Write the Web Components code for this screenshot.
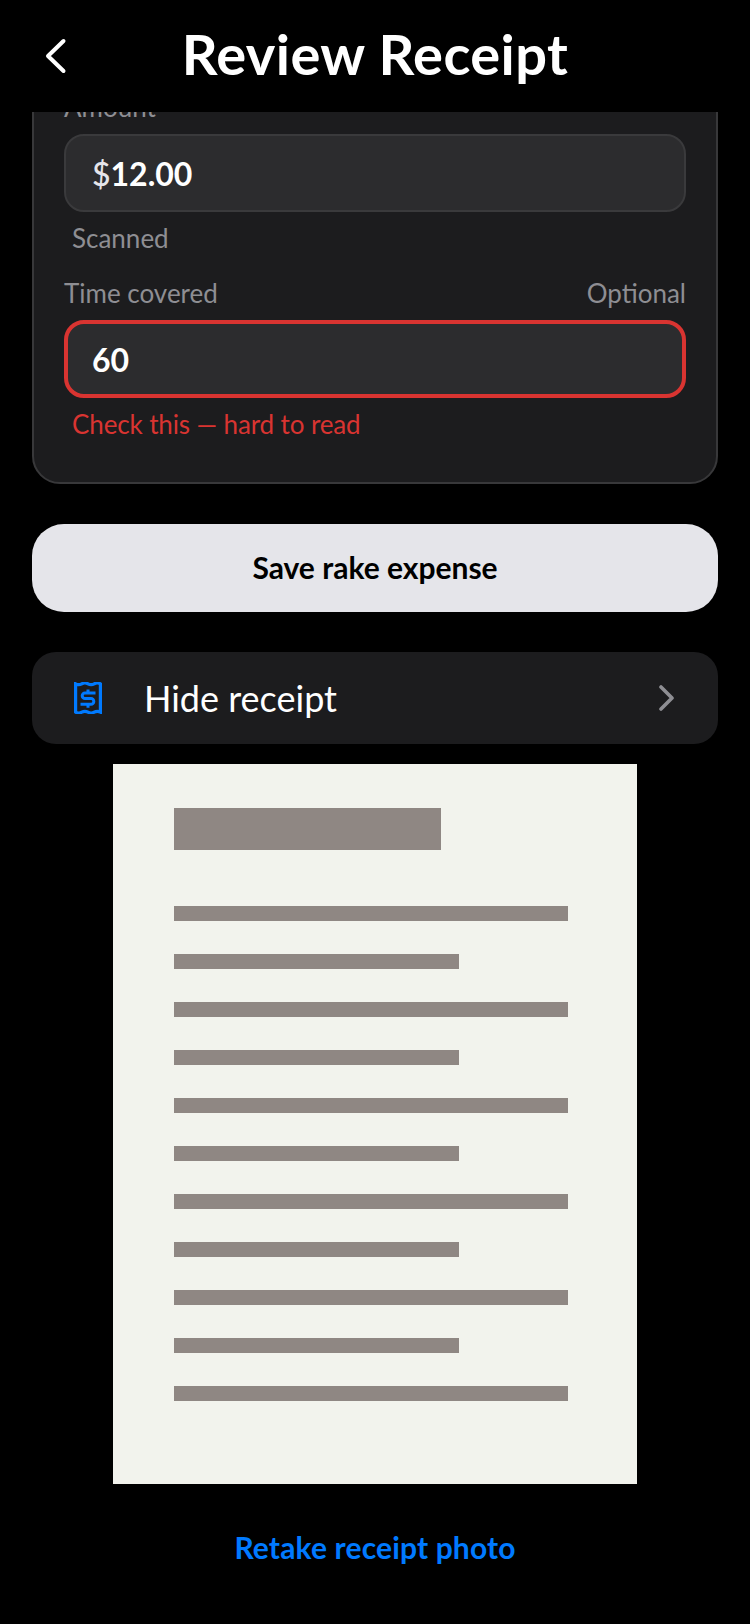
<!DOCTYPE html>
<html lang="en">
<head>
<meta charset="utf-8">
<title>Review Receipt</title>
<style>
  html, body { margin: 0; background: #000; }
  body {
    width: 750px;
    height: 1624px;
    overflow: hidden;
    display: flex;
    flex-direction: column;
    font-family: Lato, "Open Sans", sans-serif;
  }
  main {
    flex: 1;
    min-height: 0;
    overflow: hidden;
    display: flex;
    flex-direction: column;
    padding: 0 32px;
  }
</style>
</head>
<body>
<app-header heading="Review Receipt"></app-header>
<main>
  <form-card>
    <form-field label="Amount" hint="Scanned"><span slot="prefix">$</span>12.00</form-field>
    <form-field label="Time covered" aside="Optional" error="Check this — hard to read">60</form-field>
  </form-card>
  <primary-button>Save rake expense</primary-button>
  <disclosure-row>Hide receipt</disclosure-row>
  <receipt-preview></receipt-preview>
  <text-link>Retake receipt photo</text-link>
</main>

<script>
class AppHeader extends HTMLElement {
  constructor() {
    super();
    this.attachShadow({ mode: 'open' });
  }

  connectedCallback() {
    this.shadowRoot.innerHTML = `
      <style>
        :host {
          display: grid;
          grid-template-columns: 112px 1fr 112px;
          align-items: center;
          flex: none;
          height: 112px;
          background: #000;
          color: #fff;
        }
        .back { display: flex; padding-left: 44px; }
        h1 {
          margin: 0;
          padding-bottom: 4px;
          text-align: center;
          font-size: 56px;
          font-weight: 700;
          letter-spacing: 0.4px;
          line-height: 1;
        }
      </style>
      <div class="back">
        <svg width="24" height="36" viewBox="0 0 24 36" fill="none" stroke="#fff" stroke-width="4" stroke-linecap="round" stroke-linejoin="round">
          <path d="M19.5 3 L4 18 L19.5 33"/>
        </svg>
      </div>
      <h1>${this.getAttribute('heading')}</h1>
      <div></div>
    `;
  }
}

class FormCard extends HTMLElement {
  constructor() {
    super();
    this.attachShadow({ mode: 'open' });
    this.shadowRoot.innerHTML = `
      <style>
        :host {
          display: flex;
          flex-direction: column;
          flex: none;
          gap: 27px;
          margin-top: -51px;
          padding: 30px 30px 44px;
          background: #1c1c1e;
          border: 2px solid #38383a;
          border-radius: 28px;
        }
      </style>
      <slot></slot>
    `;
  }
}

class FormField extends HTMLElement {
  constructor() {
    super();
    this.attachShadow({ mode: 'open' });
  }

  connectedCallback() {
    const error = this.getAttribute('error');
    const note = error || this.getAttribute('hint') || '';
    this.shadowRoot.innerHTML = `
      <style>
        :host { display: block; font-size: 26px; line-height: 28px; color: #8e8e93; }
        .top { display: flex; justify-content: space-between; margin-bottom: 13px; }
        .box {
          display: flex;
          align-items: center;
          box-sizing: border-box;
          height: 78px;
          padding: 2px 26px 0;
          background: #2c2c2e;
          border: 2px solid #3a3a3c;
          border-radius: 20px;
          color: #fff;
          font-size: 32px;
          font-weight: 700;
        }
        ::slotted([slot=prefix]) { color: #e5e5ea; font-weight: 500; }
        .note { margin: 12px 8px 0; }
        :host([error]) .box { border: 4px solid #d93431; padding: 2px 24px 0; }
        :host([error]) .note { color: #d93431; letter-spacing: -0.12px; }
      </style>
      <div class="top">
        <span>${this.getAttribute('label')}</span>
        <span>${this.getAttribute('aside') || ''}</span>
      </div>
      <div class="box"><slot name="prefix"></slot><slot></slot></div>
      <div class="note">${note}</div>
    `;
  }
}

class PrimaryButton extends HTMLElement {
  constructor() {
    super();
    this.attachShadow({ mode: 'open' });
    this.shadowRoot.innerHTML = `
      <style>
        :host {
          display: flex;
          align-items: center;
          justify-content: center;
          flex: none;
          box-sizing: border-box;
          height: 88px;
          margin-top: 40px;
          padding-bottom: 2px;
          background: #e5e5ea;
          border-radius: 32px;
          color: #000;
          font-size: 30px;
          font-weight: 700;
        }
      </style>
      <slot></slot>
    `;
  }
}

class DisclosureRow extends HTMLElement {
  constructor() {
    super();
    this.attachShadow({ mode: 'open' });
    this.shadowRoot.innerHTML = `
      <style>
        :host {
          display: flex;
          align-items: center;
          flex: none;
          box-sizing: border-box;
          height: 92px;
          margin-top: 40px;
          padding: 0 43px 0 42px;
          background: #1c1c1e;
          border-radius: 24px;
          color: #fff;
          font-size: 36px;
        }
        .label { flex: 1; margin-left: 42px; }
      </style>
      <svg width="28" height="32" viewBox="0 0 28 32" fill="none" stroke="#007aff" stroke-width="3.2" stroke-linejoin="miter">
        <path d="M1.6 1.8 q3.1 1.8 6.2 0 t6.2 0 t6.2 0 t6.2 0 V30.2 q-3.1 -1.8 -6.2 0 t-6.2 0 t-6.2 0 t-6.2 0 Z"/>
        <path stroke-width="3" d="M21.5 11 H11 A2.8 2.8 0 0 0 11 16.6 H17 A2.8 2.8 0 0 1 17 22.2 H6.5 M14 7.5 V11 M14 22.2 V25.7"/>
      </svg>
      <span class="label"><slot></slot></span>
      <svg width="16" height="26" viewBox="0 0 16 26" fill="none" stroke="#8e8e93" stroke-width="3.6" stroke-linecap="round" stroke-linejoin="round">
        <path d="M2 2 L13 13 L2 24"/>
      </svg>
    `;
  }
}

class ReceiptPreview extends HTMLElement {
  constructor() {
    super();
    this.attachShadow({ mode: 'open' });
    // Alternan linea larga y corta, empezando y acabando en larga.
    const lines = Array.from({ length: 11 }, (_, i) =>
      `<div class="line ${i % 2 ? 'short' : ''}"></div>`).join('');
    this.shadowRoot.innerHTML = `
      <style>
        :host {
          display: flex;
          flex-direction: column;
          flex: none;
          align-self: center;
          box-sizing: border-box;
          width: 524px;
          height: 720px;
          margin-top: 20px;
          padding: 44px 0 0 61px;
          background: #f2f3ed;
        }
        .block { width: 267px; height: 42px; margin-bottom: 56px; background: #8f8783; }
        .lines { display: flex; flex-direction: column; gap: 33px; }
        .line { width: 394px; height: 15px; background: #8f8783; }
        .short { width: 285px; }
      </style>
      <div class="block"></div>
      <div class="lines">${lines}</div>
    `;
  }
}

class TextLink extends HTMLElement {
  constructor() {
    super();
    this.attachShadow({ mode: 'open' });
    this.shadowRoot.innerHTML = `
      <style>
        :host {
          display: block;
          flex: none;
          margin-top: 45px;
          text-align: center;
          color: #007aff;
          font-size: 30px;
          font-weight: 700;
          letter-spacing: 0.15px;
          line-height: 36px;
        }
      </style>
      <slot></slot>
    `;
  }
}

customElements.define('app-header', AppHeader);
customElements.define('form-card', FormCard);
customElements.define('form-field', FormField);
customElements.define('primary-button', PrimaryButton);
customElements.define('disclosure-row', DisclosureRow);
customElements.define('receipt-preview', ReceiptPreview);
customElements.define('text-link', TextLink);
</script>
</body>
</html>
